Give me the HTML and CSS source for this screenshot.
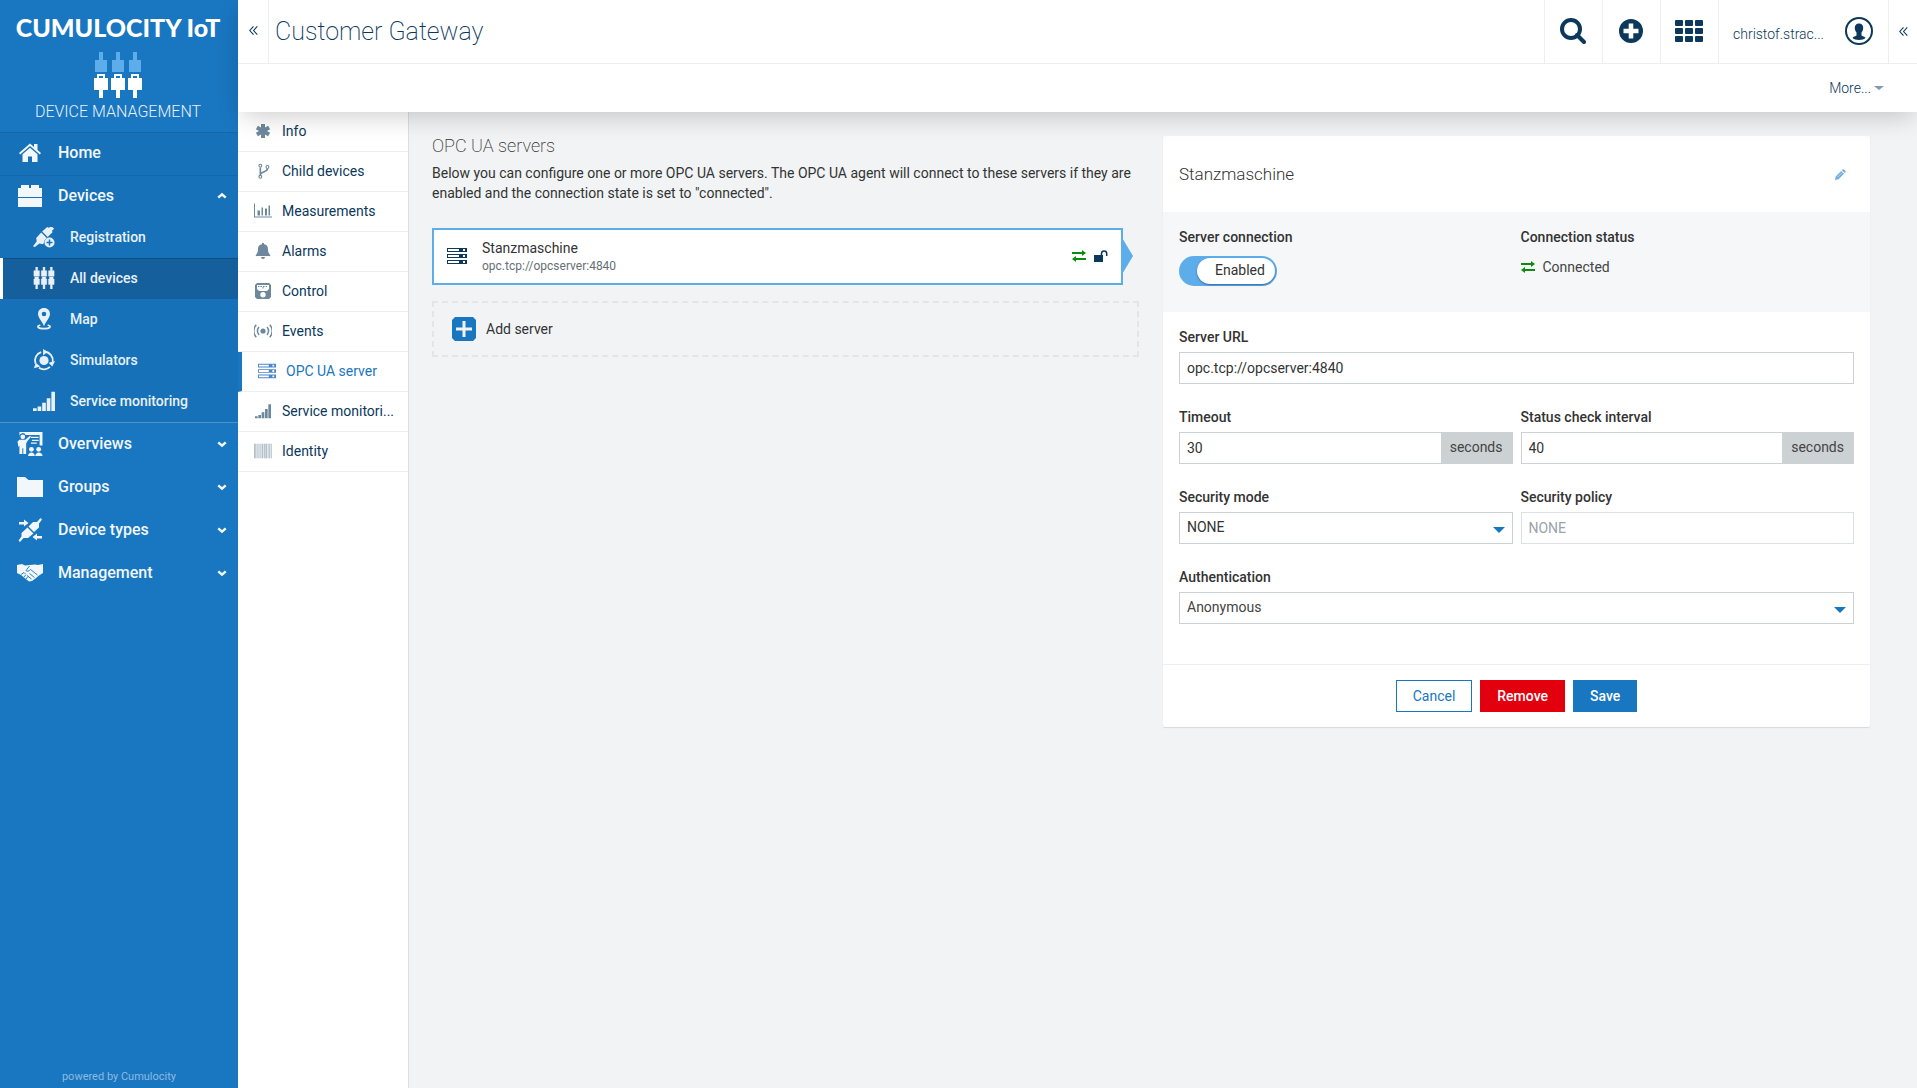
FILE: index.html
```html
<!DOCTYPE html>
<html lang="en">
<head>
<meta charset="utf-8">
<meta name="viewport" content="width=device-width, initial-scale=1">
<title>Customer Gateway - OPC UA server</title>
<link rel="stylesheet" href="styles.css">
</head>
<body>
<svg class="sprite" aria-hidden="true">
  <symbol id="home" viewBox="0 0 24 24"><path d="M1 12 12 2.500l4 3.500V3h3.500v6L23 12l-1.200 1.400L12 5 2.200 13.400z"/><path d="M4.500 13.200 12 6.800l7.500 6.400V21H14v-5.500h-4V21H4.500z"/></symbol>
  <symbol id="box" viewBox="0 0 24 24"><path d="M3 1h8v3h2V1h8v3h3v9H0V4h3zM0 14h24v9H0z"/></symbol>
  <symbol id="plug-add" viewBox="0 0 24 24"><path d="M21 1l2 2-2.500 2.500 1 1-5.500 5.500-6-6L15.500 1l1.500 1 2-1zM9 7l6 6a6 6 0 0 0-3 5l-1 2-4-1-5 4-2-1 4-5-.5-4z"/><path fill-rule="evenodd" d="M18 12.500a5.500 5.500 0 1 1 0 11 5.500 5.500 0 0 1 0-11zm-.8 2.300v2.400h-2.400v1.600h2.400v2.400h1.600v-2.400h2.400v-1.600h-2.400v-2.400z"/></symbol>
  <symbol id="all-devices" viewBox="0 0 24 24"><path d="M3 0h2v4h2v6H1V4h2zM2 11h4v2h1v6H5v5H3v-5H1v-6h1zM11 0h2v4h2v6H9V4h2zm-1 11h4v2h1v6h-2v5h-2v-5H9v-6h1zM19 0h2v4h2v6h-6V4h2zm-1 11h4v2h1v6h-2v5h-2v-5h-2v-6h1z" stroke="currentColor" stroke-width=".5"/></symbol>
  <symbol id="map" viewBox="0 0 24 24"><path fill-rule="evenodd" d="M12 0c4 0 6.500 2.800 6.500 6.500 0 4-4.500 8-6.500 13.500C10 14.500 5.500 10.500 5.500 6.500 5.500 2.800 8 0 12 0zm0 4a2.500 2.500 0 1 0 0 5 2.500 2.500 0 0 0 0-5z"/><path d="M8 18.500c-5 1.500-2.500 4 4 4s9-2.500 4-4" fill="none" stroke="currentColor" stroke-width="1.800"/></symbol>
  <symbol id="simulator" viewBox="0 0 24 24"><circle cx="12" cy="12.500" r="5"/><g fill="none" stroke="currentColor" stroke-width="2"><path d="M13 3a9.500 9.500 0 0 1 8.500 11M18.500 19.500a9.500 9.500 0 0 1-12 1M2.800 16A9.500 9.500 0 0 1 9 3.500"/></g><path d="M11 0l5 3-5 4zM24 13l-3 6-4-4zM1 21l2-6 5 4z"/></symbol>
  <symbol id="signal" viewBox="0 0 24 24"><path d="M0 20h4v3H0zM5 18h4v5H5zM10 14h4v9h-4zM15 9h4v14h-4zM20 2h4v21h-4z"/></symbol>
  <symbol id="overview" viewBox="0 0 26 25"><path d="M2 0h24v14h-3V3H8.500A3.500 3.500 0 0 0 2 4zM0 10l2-2h6l5-4 1 1-4 5-1 2v11H6v-6H5v6H2v-9l-1 2z"/><path d="M14 5h8v1.300h-8zM15 8h7v1.300h-7zM14 11h6v1.300h-6z"/><circle cx="14.500" cy="18" r="2.500"/><circle cx="22" cy="18" r="2.500"/><path d="M11 25c0-5 7-5 7 0zm7.500 0c0-5 7.500-5 7.500 0z"/><circle cx="5.500" cy="5" r="2.500"/></symbol>
  <symbol id="folder" viewBox="0 0 26 20"><path d="M0 0h8l3.500 3H26v17H0z"/></symbol>
  <symbol id="device-type" viewBox="0 0 24 24"><path d="M1 4h5V1.500L10.500 5 6 8.500V6.500H1zM24 18h-5v-2.500L14.500 19l4.500 3.500v-2h5zM22.500 0L24 1.500l-3 4v4L16 14 10.500 8.500 15 4h4zM9.500 9.500l6 6L10 20H5.500L2 24l-1.500-1.500 3-4V15z"/></symbol>
  <symbol id="handshake" viewBox="0 0 26 18"><path d="M0 1l5-1 3 1.500L13 1l5-.5L21 1l5-1v9l-4 2.500-3 2.500-2 1.500-2 1.500-3 .5-5-4L4 11l-4-2z"/><path d="M12.500 2 9 6.500c1 1.500 3 .5 4.500-1l7 5.500M12.500 9.500l5 4M10 11.500l4.500 3.500M4 10.500l3-2 1.500 1.500M7 13l2-2.500M9 15l2-2.500" fill="none" stroke="#1976c0" stroke-width=".9"/></symbol>
  <symbol id="up" viewBox="0 0 12 8"><path d="M1.500 6 6 2l4.500 4" fill="none" stroke="currentColor" stroke-width="3"/></symbol>
  <symbol id="down" viewBox="0 0 12 8"><path d="M1.500 2 6 6l4.500-4" fill="none" stroke="currentColor" stroke-width="3"/></symbol>
  <symbol id="asterisk" viewBox="0 0 16 16"><path d="M8 1v14M1.900 4.500l12.200 7M14.100 4.500l-12.200 7" stroke="currentColor" stroke-width="4"/></symbol>
  <symbol id="branch" viewBox="0 0 18 18"><g fill="none" stroke="currentColor" stroke-width="1.200"><circle cx="6" cy="3" r="1.600"/><circle cx="14" cy="4.500" r="1.600"/><circle cx="6" cy="15.500" r="1.600"/><path d="M6 5v9M14 6.500c0 4-8 3-8 6.500" stroke-width="1.800"/></g></symbol>
  <symbol id="chart" viewBox="0 0 18 15"><path d="M0 0h1v13h17v1H0zM3.500 7H6v5H3.500zM7.500 4H9v8H7.500zM11 5h2v7h-2zM14.500 2H16v10h-1.500z"/></symbol>
  <symbol id="bell" viewBox="0 0 16 16"><path d="M7 0h2v1.200c3.500.5 4 3 4 5.500 0 2.300 1 3.800 2.200 5.300v1H.8v-1C2 10.500 3 9 3 6.700c0-2.500.5-5 4-5.500zM6 14h4a2 2 0 0 1-4 0z"/></symbol>
  <symbol id="control" viewBox="0 0 16 16"><path fill-rule="evenodd" d="M2 0h12l2 2v12l-2 2H2l-2-2V2zm0 2v4l2 2h8l2-2V2zM8 9a2.700 2.700 0 1 0 0 5.400A2.700 2.700 0 0 0 8 9z"/><path d="M3 3.500h10M8 4v2" stroke="currentColor" stroke-dasharray="1.500 1"/></symbol>
  <symbol id="events" viewBox="1 0 16 14"><circle cx="9" cy="7" r="2.300"/><path d="M5.500 3.500a5 5 0 0 0 0 7M12.500 3.500a5 5 0 0 1 0 7M3 1.500a8 8 0 0 0 0 11M15 1.500a8 8 0 0 1 0 11" fill="none" stroke="currentColor" stroke-width="1.300"/></symbol>
  <symbol id="server" viewBox="0 0 20 16"><path fill-rule="evenodd" d="M0 0h20v4H0zm1 1v2h11V1zm15 0v2h2V1zM0 6h20v4H0zm1 1v2h11V7zm15 0v2h2V7zM0 12h20v4H0zm1 1v2h11v-2zm15 0v2h2v-2z"/></symbol>
  <symbol id="barcode" viewBox="0 0 16 13"><g stroke="currentColor"><path d="M.5 0v13" opacity=".4"/><path d="M1.500 0v13M3.500 0v13M5.500 0v13M15.500 0v13" opacity=".25"/><path d="M7.500 0v13M9.500 0v13M11 0v13M13.500 0v13" opacity=".4"/><path d="M0 6.500h16" stroke-width="13" opacity=".2"/></g></symbol>
  <symbol id="search" viewBox="0 0 26 26"><circle cx="11" cy="11" r="9" fill="none" stroke="currentColor" stroke-width="4"/><path d="M17 17l7 7" stroke="currentColor" stroke-width="4" stroke-linecap="round"/></symbol>
  <symbol id="plus-circle" viewBox="0 0 24 24"><path fill-rule="evenodd" d="M12 0a12 12 0 1 0 0 24 12 12 0 0 0 0-24zM9.700 4.500h4.600v5.200h5.200v4.600h-5.200v5.200H9.700v-5.200H4.500V9.700h5.200z"/></symbol>
  <symbol id="grid" viewBox="0 0 28 22"><g id="r"><rect width="8" height="6" rx="1"/><rect x="10" width="8" height="6" rx="1"/><rect x="20" width="8" height="6" rx="1"/></g><use href="#r" y="8"/><use href="#r" y="16"/></symbol>
  <symbol id="user" viewBox="0 0 28 28"><circle cx="14" cy="14" r="13" fill="none" stroke="currentColor" stroke-width="2"/><path d="M14 6.500c3 0 4.500 2 4.200 5-.2 2-1 3-1.700 4v3c.5 1 3.500 1 4 2.500-2 2.500-11 2.500-13 0 .5-1.500 3.500-1.500 4-2.500v-3c-.7-1-1.500-2-1.700-4-.3-3 1.200-5 4.200-5z"/></symbol>
  <symbol id="laquo" viewBox="0 0 10 10"><path d="M5 .5.900 5 5 9.500M9.200.5 5.100 5l4.100 4.500" fill="none" stroke="currentColor" stroke-width="1.200"/></symbol>
  <symbol id="arrows" viewBox="0 0 14 12"><path d="M0 2h10V0l4 3-4 3V4H0zM14 8H4V6L0 9l4 3v-2h10z"/></symbol>
  <symbol id="unlock" viewBox="0 0 14 12"><path d="M0 5h9v7H0z"/><path d="M7.500 5V3.500a2.600 2.600 0 0 1 5.200 0V6" fill="none" stroke="currentColor" stroke-width="1.500"/></symbol>
  <symbol id="add" viewBox="0 0 24 24"><path fill-rule="evenodd" d="M3 0h18l3 3v18l-3 3H3l-3-3V3zm7.500 4v6.500H4v3h6.500V20h3v-6.500H20v-3h-6.500V4z"/></symbol>
  <symbol id="pencil" viewBox="0 0 11 11"><path d="M0 11l.7-3.500L6.200 2l2.800 2.800-5.500 5.500zM6.900 1.300 8 .2C9 0 11 2 10.800 3L9.700 4.100z"/><path d="M2.500 8.200 7 3.700" stroke="#fff" stroke-width=".7" opacity=".7"/></symbol>
</svg>

<div class="app">
  <aside class="sidebar">
    <div class="brand">
      <div class="brand-name">CUMULOCITY IoT</div>
      <svg class="brand-icon" viewBox="0 0 48 46"><path class="pale" d="M5 0h4v8h4v12H1V8h4zM22 0h4v8h4v12H18V8h4zM39 0h4v8h4v12H35V8h4z"/><path fill-rule="evenodd" d="M3 22h8v4h3v12H9v8H5v-8H0V26h3zm2 2v2h4v-2zM20 22h8v4h3v12h-5v8h-4v-8h-5V26h3zm2 2v2h4v-2zM37 22h8v4h3v12h-5v8h-4v-8h-5V26h3zm2 2v2h4v-2z"/></svg>
      <div class="brand-app">DEVICE MANAGEMENT</div>
    </div>
    <nav class="menu" aria-label="Main">
      <div class="menu-open">
        <a class="item" href="#"><svg><use href="#home"/></svg><span>Home</span></a>
        <a class="item" href="#"><svg><use href="#box"/></svg><span>Devices</span><svg class="chev"><use href="#up"/></svg></a>
        <a class="sub" href="#"><svg><use href="#plug-add"/></svg><span>Registration</span></a>
        <a class="sub active" href="#"><svg><use href="#all-devices"/></svg><span>All devices</span></a>
        <a class="sub" href="#"><svg><use href="#map"/></svg><span>Map</span></a>
        <a class="sub" href="#"><svg><use href="#simulator"/></svg><span>Simulators</span></a>
        <a class="sub" href="#"><svg><use href="#signal"/></svg><span>Service monitoring</span></a>
      </div>
      <a class="item" href="#"><svg><use href="#overview"/></svg><span>Overviews</span><svg class="chev"><use href="#down"/></svg></a>
      <a class="item" href="#"><svg class="i-folder"><use href="#folder"/></svg><span>Groups</span><svg class="chev"><use href="#down"/></svg></a>
      <a class="item" href="#"><svg><use href="#device-type"/></svg><span>Device types</span><svg class="chev"><use href="#down"/></svg></a>
      <a class="item" href="#"><svg><use href="#handshake"/></svg><span>Management</span><svg class="chev"><use href="#down"/></svg></a>
    </nav>
    <footer class="powered">powered by Cumulocity</footer>
  </aside>

  <div class="page">
    <header class="header">
      <div class="topbar">
        <button class="fold" aria-label="Collapse navigator"><svg><use href="#laquo"/></svg></button>
        <h1>Customer Gateway</h1>
        <button class="tool" aria-label="Search"><svg class="i-search"><use href="#search"/></svg></button>
        <button class="tool" aria-label="Add"><svg class="i-plus"><use href="#plus-circle"/></svg></button>
        <button class="tool" aria-label="Applications"><svg class="i-grid"><use href="#grid"/></svg></button>
        <button class="account"><span>christof.strac...</span><svg><use href="#user"/></svg></button>
        <button class="drawer" aria-label="Open drawer"><svg><use href="#laquo"/></svg></button>
      </div>
      <div class="actionbar"><button class="more">More...<i class="caret"></i></button></div>
    </header>

    <div class="body">
      <nav class="tabs" aria-label="Device">
        <a href="#"><svg><use href="#asterisk"/></svg><span>Info</span></a>
        <a href="#"><svg><use href="#branch"/></svg><span>Child devices</span></a>
        <a href="#"><svg><use href="#chart"/></svg><span>Measurements</span></a>
        <a href="#"><svg><use href="#bell"/></svg><span>Alarms</span></a>
        <a href="#"><svg><use href="#control"/></svg><span>Control</span></a>
        <a href="#"><svg><use href="#events"/></svg><span>Events</span></a>
        <a href="#" class="current"><svg><use href="#server"/></svg><span>OPC UA server</span></a>
        <a href="#"><svg><use href="#signal"/></svg><span>Service monitori...</span></a>
        <a href="#"><svg><use href="#barcode"/></svg><span>Identity</span></a>
      </nav>

      <main class="content">
        <section class="servers">
          <h2>OPC UA servers</h2>
          <p>Below you can configure one or more OPC UA servers. The OPC UA agent will connect to these servers if they are enabled and the connection state is set to "connected".</p>
          <a class="server" href="#">
            <svg class="server-icon"><use href="#server"/></svg>
            <span class="server-text"><span class="server-name">Stanzmaschine</span><span class="server-url">opc.tcp://opcserver:4840</span></span>
            <svg class="state ok"><use href="#arrows"/></svg>
            <svg class="state"><use href="#unlock"/></svg>
          </a>
          <button class="add"><svg><use href="#add"/></svg>Add server</button>
        </section>

        <form class="card">
          <div class="card-head"><h3>Stanzmaschine</h3><button type="button" class="edit" aria-label="Edit name"><svg><use href="#pencil"/></svg></button></div>
          <div class="status">
            <div>
              <div class="label">Server connection</div>
              <label class="toggle"><input type="checkbox" checked><span>Enabled</span></label>
            </div>
            <div>
              <div class="label">Connection status</div>
              <div class="connected"><svg class="ok"><use href="#arrows"/></svg>Connected</div>
            </div>
          </div>
          <div class="fields">
            <div class="field wide"><label class="label" for="url">Server URL</label><input id="url" type="text" value="opc.tcp://opcserver:4840"></div>
            <div class="field"><label class="label" for="timeout">Timeout</label><div class="group"><input id="timeout" type="text" value="30"><span>seconds</span></div></div>
            <div class="field"><label class="label" for="interval">Status check interval</label><div class="group"><input id="interval" type="text" value="40"><span>seconds</span></div></div>
            <div class="field"><label class="label" for="mode">Security mode</label><div class="select"><select id="mode"><option>NONE</option></select></div></div>
            <div class="field"><label class="label" for="policy">Security policy</label><input id="policy" type="text" value="NONE" disabled></div>
            <div class="field wide"><label class="label" for="auth">Authentication</label><div class="select light"><select id="auth"><option>Anonymous</option></select></div></div>
          </div>
          <div class="card-foot">
            <button type="button" class="btn">Cancel</button>
            <button type="button" class="btn danger">Remove</button>
            <button type="button" class="btn primary">Save</button>
          </div>
        </form>
      </main>
    </div>
  </div>
</div>
</body>
</html>
```
FILE: styles.css
```css
:root {
  --brand: #1976c0;
  --navy: #0b385b;
  --sky: #5eadeb;
  --text: #333;
  --line: #eceeef;
  --field: #ccd1d4;
}

* { box-sizing: border-box; }

body {
  margin: 0;
  font: 14px/20px Roboto, "Liberation Sans", sans-serif;
  color: var(--text);
}

button, input, select { font: inherit; color: inherit; }
button { background: none; border: 0; padding: 0; cursor: pointer; }
a { color: inherit; text-decoration: none; }
svg { fill: currentColor; flex: none; display: block; }
h1, h2, h3, p { margin: 0; }
.sprite { position: absolute; width: 0; height: 0; }

.app { display: flex; min-height: 100vh; }

/* Navigator */
.sidebar {
  width: 238px;
  flex: none;
  display: flex;
  flex-direction: column;
  background: var(--brand);
  color: #fff;
}
.brand {
  height: 132px;
  padding: 11px 2px 0 0;
  display: flex;
  flex-direction: column;
  align-items: center;
}
.brand-name { font: 900 25px/32px Lato, sans-serif; white-space: nowrap; }
.brand-icon { width: 48px; height: 46px; margin-top: 9px; }
.brand-icon .pale { fill: var(--sky); }
.brand-app { font-size: 16px; line-height: 24px; margin-top: 2px; color: #e8f1f9; font-weight: 300; }

.menu-open { background: #1771b8; border-bottom: 1px solid #4b93cd; }
.item, .sub { display: flex; align-items: center; padding-bottom: 2px; font-weight: 500; }
.item {
  height: 43px;
  padding-left: 17px;
  padding-right: 11px;
  gap: 15px;
  font-size: 16px;
  color: #f2f7fb;
}
.menu-open .item { border-top: 1px solid #1467a9; }
.menu-open .item + .item { height: 42px; }
.item svg { width: 26px; height: 24px; }
.item .i-folder { height: 20px; }
.item span { flex: 1; }
.item .chev { width: 10px; height: 8px; }
.sub {
  height: 41px;
  padding-left: 30px;
  gap: 15px;
  border-left: 3px solid transparent;
  color: #e8f1f8;
}
.sub svg { width: 22px; height: 22px; }
.sub.active { background: #155f9d; border-left-color: #fff; box-shadow: inset 0 1px #0f4f86; }
.powered { margin-top: auto; text-align: center; font-size: 11px; line-height: 22px; color: #8cbbe0; }

/* Header */
.page { flex: 1; min-width: 0; display: flex; flex-direction: column; }
.header {
  position: relative;
  z-index: 1;
  background: #fff;
  color: var(--navy);
  box-shadow: 0 8px 24px -4px rgba(0, 0, 0, .2);
}
.topbar { display: flex; height: 64px; border-bottom: 1px solid var(--line); }
.topbar button { display: flex; align-items: center; justify-content: center; }
.topbar .fold { width: 31px; padding-bottom: 2px; border-right: 1px solid var(--line); }
.fold svg, .drawer svg { width: 9px; height: 9px; }
h1 { flex: 1; padding-left: 6px; font-size: 25px; line-height: 63px; font-weight: 200; }
.topbar .tool { width: 58px; padding: 0 2px 2px 0; border-left: 1px solid var(--line); }
.i-search { width: 26px; height: 26px; }
.i-plus { width: 24px; height: 24px; }
.i-grid { width: 28px; height: 22px; }
.topbar .account {
  width: 170px;
  padding: 0 15px 2px 14px;
  justify-content: space-between;
  border-left: 1px solid var(--line);
  font-weight: 300;
}
.account span { padding-top: 7px; }
.account svg { width: 28px; height: 28px; }
.topbar .drawer { width: 29px; border-left: 1px solid var(--line); }
.actionbar { display: flex; justify-content: flex-end; height: 48px; padding-right: 33px; }
.more { display: flex; align-items: center; gap: 3px; font-weight: 300; }
.caret { border: 5px solid transparent; border-top: 4px solid #7f99ad; border-bottom: 0; }

/* Device tabs */
.body { flex: 1; display: flex; }
.tabs { width: 171px; flex: none; background: #fff; border-right: 1px solid #dcdfe1; color: var(--navy); }
.tabs a {
  display: flex;
  align-items: center;
  gap: 10px;
  height: 40px;
  padding: 0 12px 2px 16px;
  border-bottom: 1px solid var(--line);
}
.tabs svg { width: 18px; height: 16px; color: #6d889d; }
.tabs span { white-space: nowrap; }
.tabs .current { border-left: 4px solid var(--brand); color: var(--brand); }
.tabs .current svg { color: #4d86c8; }

/* Content */
.content {
  flex: 1;
  display: grid;
  grid-template-columns: 1fr 1fr;
  gap: 24px;
  align-items: start;
  padding: 24px 47px 24px 23px;
  background: #f1f3f5;
}
h2 { font-size: 18px; line-height: 20px; font-weight: 200; margin-bottom: 7px; }
.servers p { margin-bottom: 25px; }
.server {
  position: relative;
  display: flex;
  align-items: center;
  height: 57px;
  margin-right: 16px;
  padding: 0 13px 2px;
  border: 2px solid var(--sky);
  background: #fff;
}
.server::after {
  content: "";
  position: absolute;
  left: 100%;
  top: 6px;
  border: 20px solid transparent;
  border-left: 12px solid var(--sky);
  border-right: 0;
}
.server-icon { width: 20px; height: 16px; color: var(--navy); }
.server-text { flex: 1; margin-left: 15px; display: flex; flex-direction: column; }
.server-url { font-size: 12px; line-height: 16px; color: #666f74; }
.state { width: 14px; height: 12px; margin-left: 8px; color: var(--navy); }
.ok { color: #0b8d0b; }
.add {
  display: flex;
  align-items: center;
  gap: 10px;
  width: 100%;
  height: 56px;
  margin-top: 16px;
  padding: 0 18px;
  border: 2px dashed #e3e5e7;
}
.add svg { width: 24px; height: 24px; color: var(--brand); }

/* Server form */
.card { background: #fff; border-radius: 2px; box-shadow: 0 1px 1px #d5d9dc; }
.card-head { display: flex; align-items: center; justify-content: space-between; height: 76px; padding: 0 24px 0 16px; }
h3 { font-size: 17px; font-weight: 300; }
.edit { color: #72afe0; }
.edit svg { width: 11px; height: 11px; }
.status, .fields { display: grid; grid-template-columns: 1fr 1fr; column-gap: 8px; padding: 15px 16px; }
.status { height: 100px; background: #f5f7f9; }
.label { display: block; font-weight: 500; line-height: 20px; }
.toggle {
  display: inline-flex;
  margin-top: 9px;
  height: 30px;
  padding: 2px 2px 2px 18px;
  border-radius: 15px;
  background: var(--sky);
  cursor: pointer;
}
.toggle input { position: absolute; opacity: 0; }
.toggle span {
  padding: 0 10px 0 18px;
  line-height: 24px;
  height: 26px;
  border-radius: 13px;
  background: #fff;
  box-shadow: 0 1px 2px rgba(0, 40, 90, .5);
}
.connected { display: flex; align-items: center; gap: 8px; margin-top: 10px; color: #444; }
.connected svg { width: 14px; height: 12px; }
.fields { row-gap: 23px; padding-bottom: 40px; }
.wide { grid-column: 1 / -1; }
.field { min-width: 0; }
.field .label { margin-bottom: 5px; }
.field input, .field select {
  display: block;
  width: 100%;
  height: 32px;
  padding: 0 7px;
  border: 1px solid var(--field);
  border-radius: 0;
  background: #fff;
  outline: 0;
}
.field input:disabled { color: #99a3aa; border-color: #dde0e2; }
.field select { appearance: none; padding-bottom: 2px; }
.group { display: flex; }
.group input { flex: 1; width: 0; min-width: 0; border-right: 0; }
.group span { padding: 0 10px 0 9px; line-height: 31px; background: var(--field); color: #444; }
.select { position: relative; }
.select::after {
  content: "";
  position: absolute;
  right: 8px;
  top: 15px;
  border: 6px solid transparent;
  border-top-color: var(--brand);
  border-bottom: 0;
  pointer-events: none;
}
.light select { color: #444; }
.card-foot { display: flex; justify-content: center; gap: 8px; padding: 15px 16px; border-top: 1px solid var(--line); }
.btn { height: 32px; padding: 0 16px; border: 1px solid var(--brand); color: var(--brand); }
.btn.danger { background: #e2000f; border-color: #e2000f; color: #fff; font-weight: 500; }
.btn.primary { background: var(--brand); color: #fff; font-weight: 500; }
```
